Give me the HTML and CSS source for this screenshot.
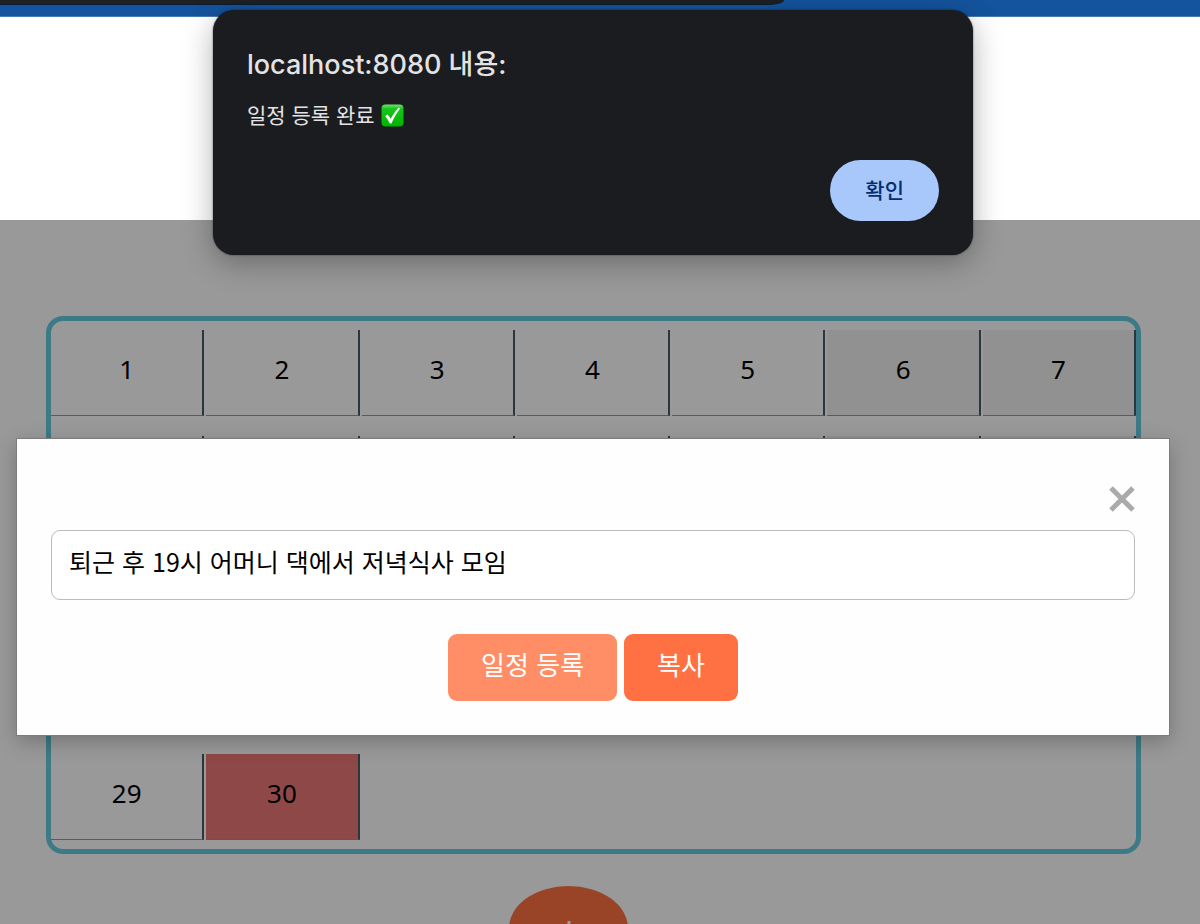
FILE: index.html
```html
<!DOCTYPE html>
<html lang="ko">
<head>
<meta charset="utf-8">
<meta name="viewport" content="width=device-width, initial-scale=1">
<title>일정</title>
<link rel="stylesheet" href="styles.css">
</head>
<body>
<div class="topbar"><div class="tab-strip"></div></div>
<header class="header"></header>
<main class="content">
  <div class="calendar">
    <div class="day">1</div><div class="day">2</div><div class="day">3</div><div class="day">4</div><div class="day">5</div><div class="day weekend">6</div><div class="day weekend">7</div>
    <div class="day">8</div><div class="day">9</div><div class="day">10</div><div class="day">11</div><div class="day">12</div><div class="day weekend">13</div><div class="day weekend">14</div>
    <div class="day">15</div><div class="day">16</div><div class="day">17</div><div class="day">18</div><div class="day">19</div><div class="day weekend">20</div><div class="day weekend">21</div>
    <div class="day">22</div><div class="day">23</div><div class="day">24</div><div class="day">25</div><div class="day">26</div><div class="day weekend">27</div><div class="day weekend">28</div>
    <div class="day">29</div><div class="day selected">30</div>
  </div>
  <button class="add" type="button" aria-label="일정 추가">
    <svg width="14" height="14" viewBox="0 0 14 14" aria-hidden="true"><path d="M7 0v14M0 7h14" stroke="#999" stroke-width="3"/></svg>
  </button>
</main>

<section class="modal" role="dialog" aria-label="일정 등록">
  <button class="close" type="button" aria-label="닫기">
    <svg width="26" height="26" viewBox="0 0 26 26" aria-hidden="true"><path d="M2 2l22 22M24 2L2 24" stroke="#aaa" stroke-width="5"/></svg>
  </button>
  <input class="field" type="text" aria-label="일정 내용" value="퇴근 후 19시 어머니 댁에서 저녁식사 모임">
  <div class="actions">
    <button class="btn btn-hover" type="button">일정 등록</button>
    <button class="btn" type="button">복사</button>
  </div>
</section>

<section class="alert" role="alertdialog" aria-labelledby="alert-title" aria-describedby="alert-text">
  <h1 class="alert-title" id="alert-title">localhost:8080 내용:</h1>
  <p class="alert-text" id="alert-text">일정 등록 완료
    <svg class="check" width="23" height="23" viewBox="0 0 23 23" role="img" aria-label="완료">
      <defs><linearGradient id="g" x1="0" y1="0" x2="0" y2="1"><stop offset="0" stop-color="#6fe36b"/><stop offset=".2" stop-color="#16c51b"/><stop offset="1" stop-color="#00b300"/></linearGradient></defs>
      <rect x="0.5" y="0.5" width="22" height="22" rx="4" fill="url(#g)"/>
      <path d="M4.200 12l2.400-1.400 3.200 4.200C11.500 11 14.300 7 17.800 3.400l1.300 1C15.700 9 12.700 14 10.400 19.400H8.800C7.400 16.600 6 14.200 4.200 12z" fill="#fff"/>
    </svg>
  </p>
  <button class="ok" type="button">확인</button>
</section>
</body>
</html>
```

FILE: styles.css
```css
* { box-sizing: border-box; }

body {
  margin: 0;
  height: 100vh;
  overflow: hidden;
  position: relative;
  background: #999;
  color: #000;
  font-family: "Noto Sans", "Noto Sans CJK KR", sans-serif;
  font-size: 26px;
}

button, input { font: inherit; }

button { border: 0; padding: 0; cursor: pointer; }

.topbar {
  height: 17px;
  background: #14539d;
  border-bottom: 1px solid #4a7ab0;
}

.tab-strip {
  width: 65.3%;
  height: 5px;
  background: #1e2024;
  border-bottom: 1px solid #0b1c30;
  border-bottom-right-radius: 16px 5px;
}

.header { height: 203px; background: #fff; }

.content {
  padding: 96px 59px 0 46px;
  background: #999;
}

.calendar {
  display: grid;
  grid-template-columns: repeat(7, 1fr);
  gap: 20px 2px;
  padding: 9px 0;
  border: 5px solid #3d7a87;
  border-radius: 17px;
}

.day {
  height: 86px;
  padding-bottom: 8px;
  display: flex;
  align-items: center;
  justify-content: center;
  border-right: 2px solid #2a373e;
  border-bottom: 1px solid #555c5e;
}

.weekend { background: #919191; }

.selected { background: #8f4848; }

.add {
  display: flex;
  align-items: center;
  justify-content: center;
  width: 119px;
  height: 84px;
  margin: 32px auto 0;
  position: relative;
  right: 25px;
  border-radius: 50%;
  background: #9a4427;
}

.modal {
  position: absolute;
  top: 439px;
  left: 17px;
  right: 31px;
  padding: 47px 34px 34px;
  display: flex;
  flex-direction: column;
  background: #fefefe;
  outline: 1px solid #7c7c7c;
  box-shadow: 0 6px 20px rgba(0, 0, 0, 0.25);
}

.close {
  align-self: flex-end;
  display: flex;
  background: none;
}

.field {
  width: 100%;
  height: 70px;
  margin: 18px 0 34px;
  padding: 0 17px 8px;
  border: 1px solid #bbb;
  border-radius: 9px;
  background: #fff;
  color: #000;
  font-family: "Noto Sans CJK KR", sans-serif;
  font-size: 25px;
}

.actions { display: flex; justify-content: center; gap: 7px; }

.btn {
  height: 67px;
  padding: 0 33px 8px;
  border-radius: 9px;
  background: #ff7043;
  color: #fff;
  font-family: "Noto Sans CJK KR", sans-serif;
}

.btn-hover { background: #ff8e66; }

.alert {
  position: absolute;
  top: 10px;
  left: 213px;
  right: 227px;
  padding: 36px 34px 34px;
  display: flex;
  flex-direction: column;
  border-radius: 21px;
  background: #1b1c1f;
  color: #e3e3e6;
  box-shadow: 0 0 2px rgba(0, 0, 0, 0.6), 0 8px 30px rgba(0, 0, 0, 0.3);
}

.alert-title {
  margin: 0;
  font: 500 27px/38px Inter, "Noto Sans CJK KR", sans-serif;
}

.alert-text {
  margin: 14px 0 30px;
  font: 21px/32px "Noto Sans CJK KR", sans-serif;
}

.check { vertical-align: -4px; }

.ok {
  align-self: flex-end;
  height: 61px;
  padding: 0 35px 4px;
  border-radius: 31px;
  background: #a8c7fa;
  color: #062e6f;
  font: 500 21px "Noto Sans CJK KR", sans-serif;
}
```
